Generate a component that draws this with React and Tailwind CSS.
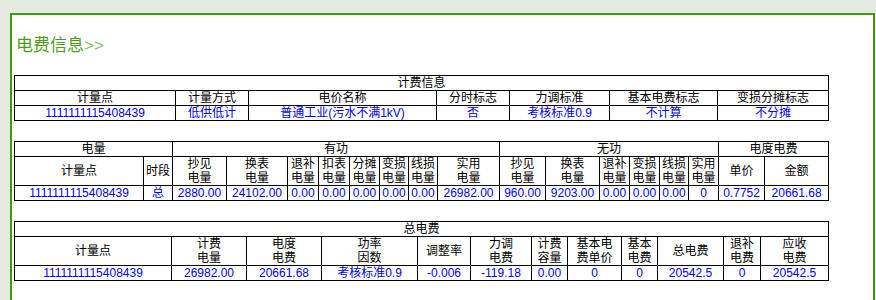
const font = { fontFamily: '"Liberation Sans", "Noto Sans CJK SC", sans-serif' };

const cell = 'border border-black text-center align-middle p-0 leading-[14px] text-[12px] whitespace-nowrap overflow-hidden';

function Cols({ widths }) {
  return (
    <colgroup>
      {widths.map((w, i) => (
        <col key={i} style={{ width: w }} />
      ))}
    </colgroup>
  );
}

function Head({ children, ...rest }) {
  return (
    <td className={`${cell} text-black`} {...rest}>
      {children}
    </td>
  );
}

function Val({ children }) {
  return <td className={`${cell} text-[#0000ff]`}>{children}</td>;
}

function Two({ a, b }) {
  return (
    <>
      {a}
      <br />
      {b}
    </>
  );
}

export default function App() {
  const w1 = [161, 73, 188, 73, 100, 108, 111];
  const w2 = [129, 29, 54, 61, 31, 31, 30, 29, 29, 62, 46, 54, 30, 30, 29, 30, 46, 64];
  const w3 = [157, 75, 75, 96, 53, 61, 36, 54, 36, 66, 37, 68];

  return (
    <div className="h-[300px] overflow-hidden bg-[#e3ebe1] pt-[13px] pl-[10px]" style={font}>
      <div className="w-[865px] h-[300px] border-2 border-b-0 border-[#3f9a0c] bg-white">
        <div className="mt-[21px] pl-[4px] text-[17px] leading-[20px] text-[#4f9a1c]">
          电费信息<span className="text-[#8ab86a]">&gt;&gt;</span>
        </div>

        <table className="ml-[2px] mt-[19px] w-[815px] table-fixed border-collapse">
          <Cols widths={w1} />
          <tbody>
            <tr>
              <Head colSpan={7}>计费信息</Head>
            </tr>
            <tr>
              <Head>计量点</Head>
              <Head>计量方式</Head>
              <Head>电价名称</Head>
              <Head>分时标志</Head>
              <Head>力调标准</Head>
              <Head>基本电费标志</Head>
              <Head>变损分摊标志</Head>
            </tr>
            <tr>
              <Val>1111111115408439</Val>
              <Val>低供低计</Val>
              <Val>普通工业(污水不满1kV)</Val>
              <Val>否</Val>
              <Val>考核标准0.9</Val>
              <Val>不计算</Val>
              <Val>不分摊</Val>
            </tr>
          </tbody>
        </table>

        <table className="ml-[2px] mt-[20px] w-[815px] table-fixed border-collapse">
          <Cols widths={w2} />
          <tbody>
            <tr>
              <Head colSpan={2}>电量</Head>
              <Head colSpan={8}>有功</Head>
              <Head colSpan={6}>无功</Head>
              <Head colSpan={2}>电度电费</Head>
            </tr>
            <tr>
              <Head>计量点</Head>
              <Head>时段</Head>
              <Head><Two a="抄见" b="电量" /></Head>
              <Head><Two a="换表" b="电量" /></Head>
              <Head><Two a="退补" b="电量" /></Head>
              <Head><Two a="扣表" b="电量" /></Head>
              <Head><Two a="分摊" b="电量" /></Head>
              <Head><Two a="变损" b="电量" /></Head>
              <Head><Two a="线损" b="电量" /></Head>
              <Head><Two a="实用" b="电量" /></Head>
              <Head><Two a="抄见" b="电量" /></Head>
              <Head><Two a="换表" b="电量" /></Head>
              <Head><Two a="退补" b="电量" /></Head>
              <Head><Two a="变损" b="电量" /></Head>
              <Head><Two a="线损" b="电量" /></Head>
              <Head><Two a="实用" b="电量" /></Head>
              <Head>单价</Head>
              <Head>金额</Head>
            </tr>
            <tr>
              <Val>1111111115408439</Val>
              <Val>总</Val>
              <Val>2880.00</Val>
              <Val>24102.00</Val>
              <Val>0.00</Val>
              <Val>0.00</Val>
              <Val>0.00</Val>
              <Val>0.00</Val>
              <Val>0.00</Val>
              <Val>26982.00</Val>
              <Val>960.00</Val>
              <Val>9203.00</Val>
              <Val>0.00</Val>
              <Val>0.00</Val>
              <Val>0.00</Val>
              <Val>0</Val>
              <Val>0.7752</Val>
              <Val>20661.68</Val>
            </tr>
          </tbody>
        </table>

        <table className="ml-[2px] mt-[20px] w-[815px] table-fixed border-collapse">
          <Cols widths={w3} />
          <tbody>
            <tr>
              <Head colSpan={12}>总电费</Head>
            </tr>
            <tr>
              <Head>计量点</Head>
              <Head><Two a="计费" b="电量" /></Head>
              <Head><Two a="电度" b="电费" /></Head>
              <Head><Two a="功率" b="因数" /></Head>
              <Head>调整率</Head>
              <Head><Two a="力调" b="电费" /></Head>
              <Head><Two a="计费" b="容量" /></Head>
              <Head><Two a="基本电" b="费单价" /></Head>
              <Head><Two a="基本" b="电费" /></Head>
              <Head>总电费</Head>
              <Head><Two a="退补" b="电费" /></Head>
              <Head><Two a="应收" b="电费" /></Head>
            </tr>
            <tr>
              <Val>1111111115408439</Val>
              <Val>26982.00</Val>
              <Val>20661.68</Val>
              <Val>考核标准0.9</Val>
              <Val>-0.006</Val>
              <Val>-119.18</Val>
              <Val>0.00</Val>
              <Val>0</Val>
              <Val>0</Val>
              <Val>20542.5</Val>
              <Val>0</Val>
              <Val>20542.5</Val>
            </tr>
          </tbody>
        </table>
      </div>
    </div>
  );
}
